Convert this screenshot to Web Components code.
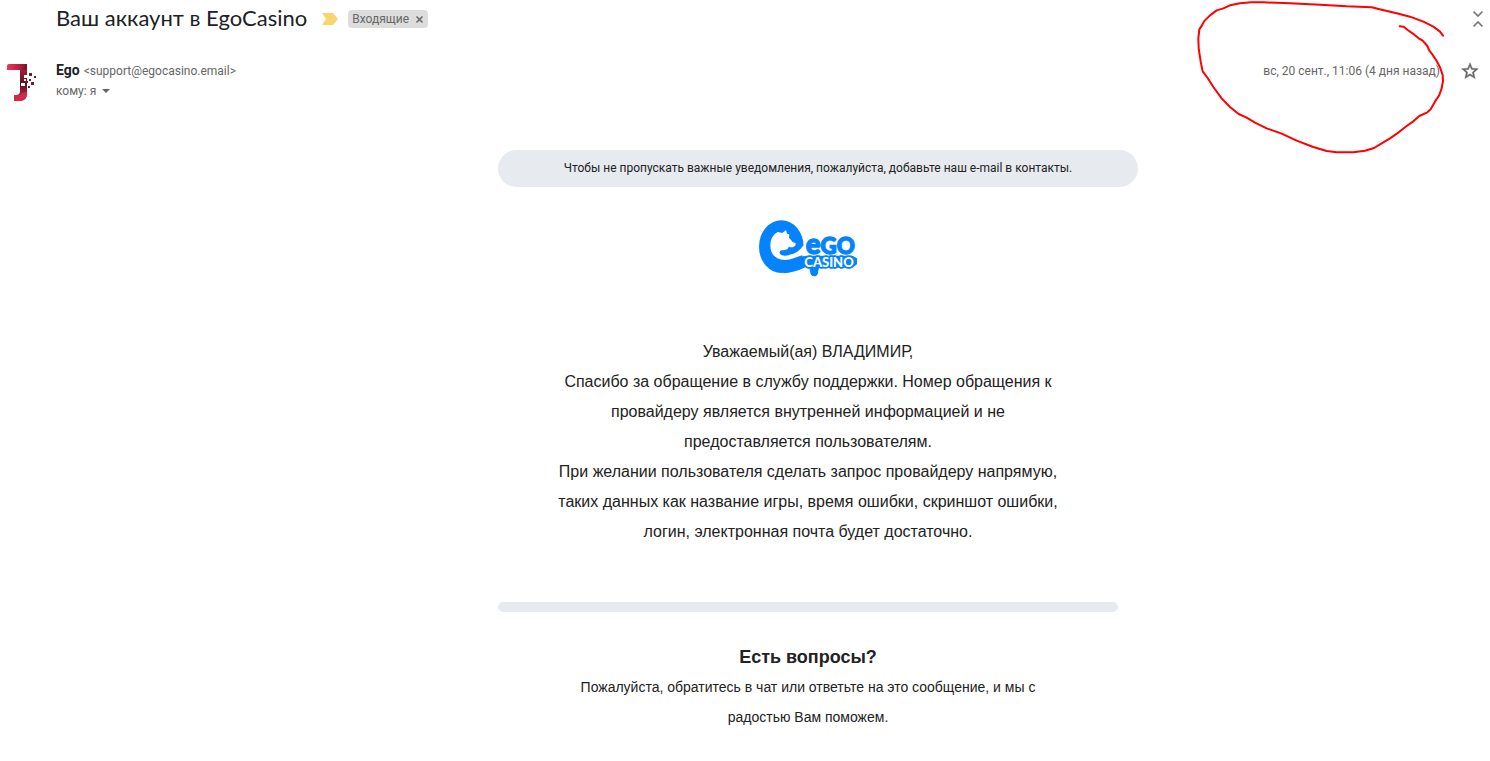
<!DOCTYPE html>
<html lang="ru">
<head>
<meta charset="utf-8">
<meta name="viewport" content="width=device-width, initial-scale=1">
<title>Ваш аккаунт в EgoCasino</title>
<style>
  body { margin: 0; background: #fff; color: #222; font-family: Roboto, "Liberation Sans", sans-serif; }
</style>
</head>
<body>
<mail-view></mail-view>

<template id="t-view">
  <style>
    :host { display: block; position: relative; overflow: hidden; }
    message-body { margin-top: 48px; }
    pen-mark { position: absolute; top: 0; right: 0; }
  </style>
  <subject-bar>Ваш аккаунт в EgoCasino<span slot="label">Входящие</span></subject-bar>
  <sender-row>
    <span slot="name">Ego</span>
    <span slot="address">&lt;support@egocasino.email&gt;</span>
    <span slot="to">кому: я</span>
    <time slot="date" datetime="2020-09-20T11:06">вс, 20 сент., 11:06 (4 дня назад)</time>
  </sender-row>
  <message-body></message-body>
  <pen-mark></pen-mark>
</template>

<template id="t-subject">
  <style>
    :host { display: flex; align-items: center; height: 38px; padding: 0 4px 0 56px; }
    h1 { margin: 0; padding-bottom: 2px; font: 400 22px/28px Lato, Roboto, sans-serif; color: #202124; }
    button { border: 0; background: none; padding: 0; font: inherit; color: inherit; cursor: pointer; display: flex; }
    .mark { margin-left: 15px; }
    .chip { display: flex; align-items: center; gap: 6px; margin-left: 10px; height: 18px; padding: 0 4px; border-radius: 4px; background: #ddd; color: #666; font-size: 12px; line-height: 18px; }
    .collapse { margin-left: auto; }
    svg { display: block; }
  </style>
  <h1><slot></slot></h1>
  <button class="mark" aria-label="Важное"><svg width="16" height="12" viewBox="0 0 16 12"><path d="M0 0h11l5 6-5 6H0l4-6z" fill="#f9d56e"/></svg></button>
  <span class="chip"><slot name="label"></slot><button aria-label="Убрать ярлык"><svg width="9" height="9" viewBox="0 0 9 9"><path d="M1.500 1.500l6 6m0-6l-6 6" stroke="#666" stroke-width="1.500"/></svg></button></span>
  <button class="collapse" aria-label="Свернуть"><svg width="16" height="20" viewBox="0 0 16 20"><path d="M3.500 2.500l4.500 4.500 4.500-4.500M3.500 17.500l4.500-4.500 4.500 4.500" fill="none" stroke="#777" stroke-width="1.700"/></svg></button>
</template>

<template id="t-sender">
  <style>
    :host { display: flex; align-items: flex-start; padding: 22px 10px 0 2px; color: #666; font-size: 12px; line-height: 20px; }
    .avatar { flex: none; width: 54px; }
    .who { flex: 1; }
    .line { display: flex; align-items: baseline; gap: 4px; }
    h2 { margin: 0; font-size: 14px; line-height: 20px; font-weight: 700; color: #202124; }
    .side { display: flex; align-items: center; gap: 20px; padding-top: 1px; }
    .date { white-space: nowrap; }
    button { border: 0; background: none; padding: 0; font: inherit; color: inherit; display: flex; align-items: center; gap: 6px; cursor: pointer; }
    svg { display: block; }
  </style>
  <svg class="avatar" width="54" height="42" viewBox="2 60 54 42" role="img" aria-label="Ego">
    <defs>
      <linearGradient id="a" x1="0" y1="0" x2="1" y2="0"><stop offset="0" stop-color="#f0365a"/><stop offset=".6" stop-color="#b81e40"/><stop offset="1" stop-color="#701426"/></linearGradient>
      <linearGradient id="b" x1="0" y1="0" x2="0" y2="1"><stop offset="0" stop-color="#b02040"/><stop offset=".5" stop-color="#5c101f"/><stop offset="1" stop-color="#d83250"/></linearGradient>
    </defs>
    <path d="M20 67h7v27q0 7-7 7h-6v-6h2q4 0 4-4z" fill="url(#b)"/>
    <path d="M9 64h18v6H7v-4q0-2 2-2z" fill="url(#a)"/>
    <path d="M14 95h6q2 0 2-2l5-1q0 9-8 9h-5z" fill="#d02a4a"/>
    <path d="M24 75h3v3h-3zM21 83h4v3h-4zM24 79h2v2h-2z" fill="#fff"/>
    <path d="M29 73h3v3h-3zM34 76h2v2h-2zM29 79h2v2h-2zM31 82h3v3h-3zM28 86h2v2h-2zM26 81h2v2h-2z" fill="#711a36"/>
  </svg>
  <div class="who">
    <div class="line"><h2><slot name="name"></slot></h2><slot name="address"></slot></div>
    <button><slot name="to"></slot><svg width="8" height="4" viewBox="0 0 8 4"><path d="M0 0h8L4 4z" fill="#666"/></svg></button>
  </div>
  <div class="side">
    <span class="date"><slot name="date"></slot></span>
    <button aria-label="Пометить"><svg width="20" height="20" viewBox="0 0 24 24"><path d="M22 9.240l-7.190-.62L12 2 9.190 8.630 2 9.240l5.460 4.730L5.820 21 12 17.270 18.180 21l-1.630-7.030L22 9.240zM12 15.400l-3.760 2.270 1-4.280-3.320-2.880 4.380-.38L12 6.100l1.710 4.040 4.380.38-3.320 2.880 1 4.280L12 15.400z" fill="#666" stroke="#666" stroke-width=".5"/></svg></button>
  </div>
</template>

<template id="t-body">
  <style>
    :host { display: block; padding-left: 146px; color: #222; }
    article { max-width: 640px; margin: 0 auto; }
    .notice { margin: 0; padding: 8px 10px 9px; border-radius: 20px; background: #e7eaef; text-align: center; font-size: 12px; line-height: 20px; }
    .column { max-width: 620px; font-family: "Liberation Sans", Arial, sans-serif; text-align: center; }
    casino-logo { margin: 32px auto 0; }
    .text { margin: 60px 56px 0; font-size: 16px; line-height: 30px; }
    .text p, .help p { margin: 0; }
    hr { height: 10px; margin: 55px 0 0; border: 0; border-radius: 5px; background: #e7eaef; }
    h3 { margin: 30px 0 0; font-size: 18px; line-height: 30px; }
    .help { padding: 0 60px 28px; font-size: 14px; line-height: 30px; }
  </style>
  <article>
    <p class="notice">Чтобы не пропускать важные уведомления, пожалуйста, добавьте наш e-mail в контакты.</p>
    <div class="column">
      <casino-logo></casino-logo>
      <div class="text">
        <p>Уважаемый(ая) ВЛАДИМИР,</p>
        <p>Спасибо за обращение в службу поддержки. Номер обращения к провайдеру является внутренней информацией и не предоставляется пользователям.</p>
        <p>При желании пользователя сделать запрос провайдеру напрямую, таких данных как название игры, время ошибки, скриншот ошибки, логин, электронная почта будет достаточно.</p>
      </div>
      <hr>
      <div class="help">
        <h3>Есть вопросы?</h3>
        <p>Пожалуйста, обратитесь в чат или ответьте на это сообщение, и мы с радостью Вам поможем.</p>
      </div>
    </div>
  </article>
</template>

<template id="t-logo">
  <style>
    :host { display: block; width: 100px; height: 58px; }
    svg { display: block; }
    text { font-family: Lato, sans-serif; font-weight: 900; }
  </style>
  <svg width="100" height="58" viewBox="39 24 300 174" role="img" aria-label="Ego Casino">
    <ellipse cx="109" cy="107" rx="67" ry="79" fill="#0583fd"/>
    <path d="M115 187Q145 186 183 168Q192 168 195 178Q195 196 208 196Q220 196 220 178L223 170H322L336 160V142L322 134H190L120 140Z" fill="#0583fd"/>
    <path d="M98 63L112 66 123 57 126 68 133 70 132 80Q138 86 142 92L152 97Q153 105 146 107Q140 111 132 107Q130 114 120 117L110 118Q102 120 104 127Q108 135 122 134Q142 132 156 123Q168 114 174 104L186 104 182 130Q160 136 146 142Q134 147 120 147Q76 144 76 103Q76 74 98 63Z" fill="#fff"/>
    <text x="182" y="129" font-size="67" fill="#0583fd" stroke="#0583fd" stroke-width="4"><tspan font-size="83">e</tspan>GO</text>
    <text x="178" y="169" font-size="39" fill="#fff" stroke="#0583fd" stroke-width="10" stroke-linejoin="round" paint-order="stroke">CASINO</text>
  </svg>
</template>

<template id="t-pen">
  <style>
    :host { display: block; width: 310px; height: 165px; pointer-events: none; }
    svg { display: block; }
  </style>
  <svg width="310" height="165" viewBox="0 0 930 495" aria-hidden="true">
    <path d="M659 79L671 80 683 90 703 104 716 115 728 122 742 138 748 152 757 163 770 183 780 202 788 225 789 243 785 265 778 285 765 305 752 328 742 337 718 348 700 364 680 378 656 397 630 415 605 430 582 444 555 452 520 457 470 457 440 453 400 441 350 422 305 401 260 385 225 368 200 353 176 342 150 321 125 295 100 261 83 234 68 214 62 185 56 145 55 115 58 88 66 76 72 64 90 46 110 31 130 25 150 16 180 10 215 7 250 7 330 10 420 14 500 19 575 22 605 29 650 40 690 50 730 65 760 80 780 95 789 107" fill="none" stroke="#ff0000" stroke-width="6" stroke-linejoin="round" stroke-linecap="round"/>
  </svg>
</template>

<script>
  const define = (name, id) => customElements.define(name, class extends HTMLElement {
    constructor() {
      super();
      this.attachShadow({ mode: 'open' }).append(document.getElementById(id).content.cloneNode(true));
    }
  });
  define('casino-logo', 't-logo');
  define('pen-mark', 't-pen');
  define('subject-bar', 't-subject');
  define('sender-row', 't-sender');
  define('message-body', 't-body');
  define('mail-view', 't-view');
</script>
</body>
</html>
